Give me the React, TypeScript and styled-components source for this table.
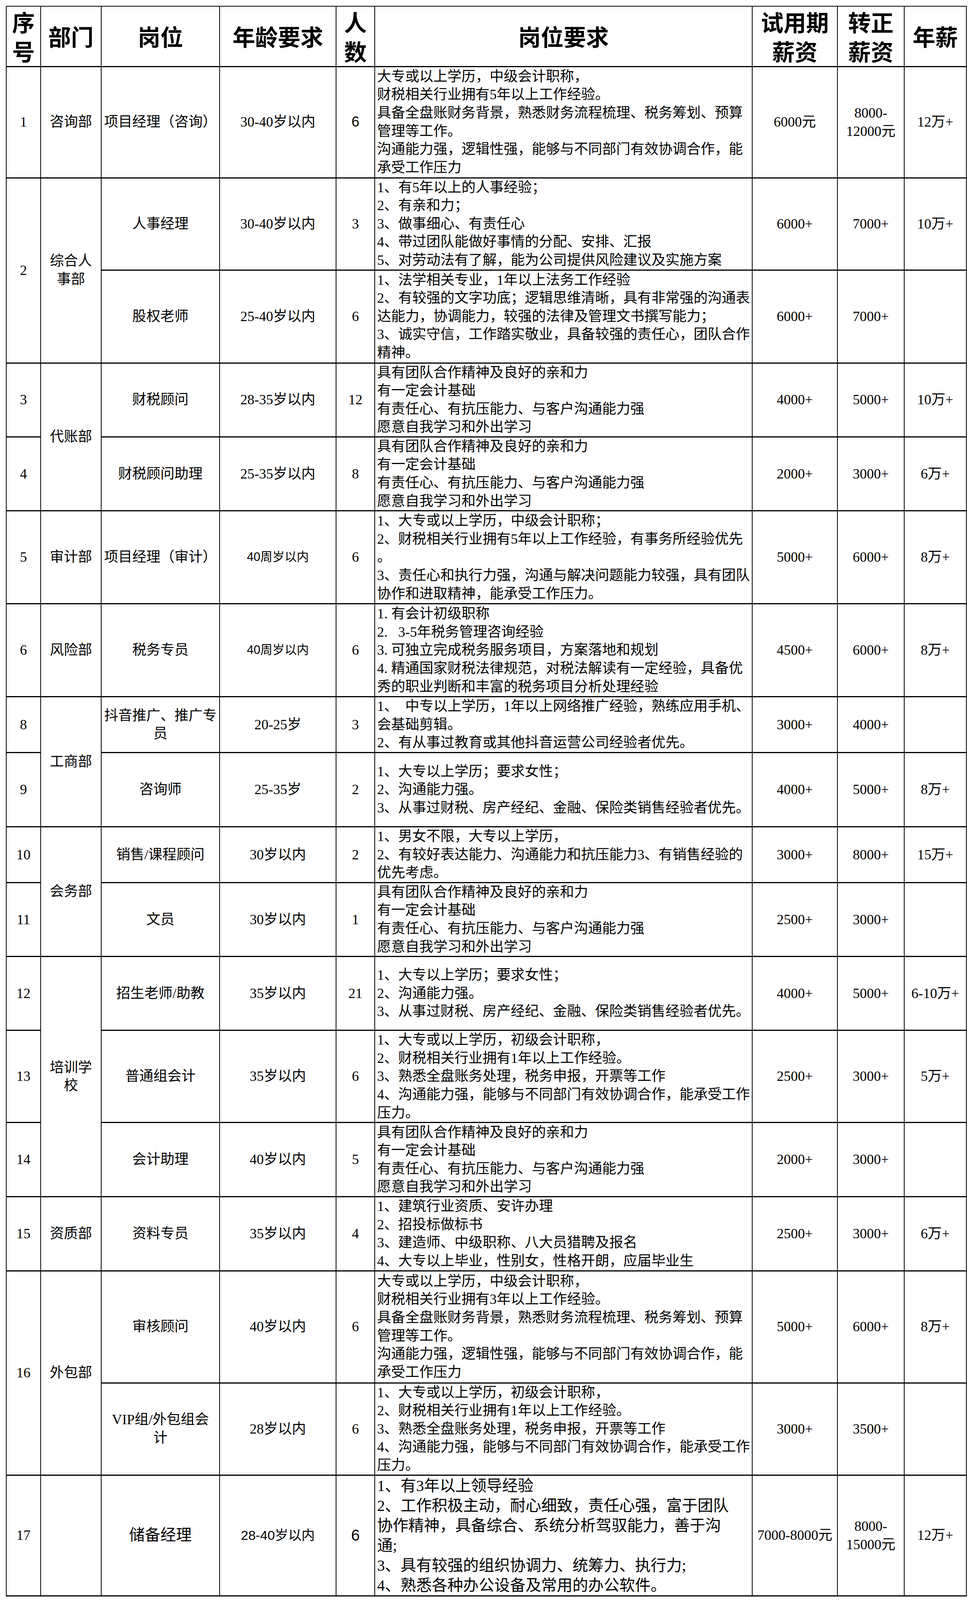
import React from "react";
import styled, { createGlobalStyle } from "styled-components";

const GlobalStyle = createGlobalStyle`
  html, body {
    margin: 0;
    padding: 0;
    background: #fff;
  }
  body {
    color: #000;
    font-family: "Liberation Serif", "Noto Sans CJK SC", serif;
  }
`;

const SERIF = `"Liberation Serif", "Noto Sans CJK SC", serif`;
const SANS = `"Liberation Sans", "Noto Sans CJK SC", sans-serif`;

// row borders are drawn outside the height given to a <tr>
const RULE = 3;

const Page = styled.div`
  padding: 15px 0 0 15px;
`;

const Sheet = styled.table`
  border-collapse: collapse;
  table-layout: fixed;
  width: 2457px;
`;

const Th = styled.th`
  border: 2px solid #000;
  padding: 0;
  font-family: "Noto Sans CJK SC", sans-serif;
  font-weight: 700;
  font-size: 58px;
  text-align: center;
  vertical-align: middle;
`;

const Td = styled.td<{ $size?: number; $left?: boolean; $sans?: boolean }>`
  border-left: 2px solid #000;
  border-right: 2px solid #000;
  border-top: ${RULE}px solid #000;
  border-bottom: ${RULE}px solid #000;
  padding: 0;
  font-family: ${(p) => (p.$sans ? SANS : SERIF)};
  font-size: ${(p) => p.$size ?? 36}px;
  text-align: ${(p) => (p.$left ? "left" : "center")};
  vertical-align: middle;
  overflow: visible;
`;

const Line = styled.div<{ $lh: number; $indent?: number }>`
  height: ${(p) => p.$lh}px;
  line-height: ${(p) => p.$lh}px;
  padding-left: ${(p) => p.$indent ?? 0}px;
  white-space: pre;
`;

type JobRow = {
  height: number;
  no: string | null;
  noSpan?: number;
  dept: string | null;
  deptSpan?: number;
  post: string;
  age: string;
  ageSans?: number;
  count: string;
  countSans?: number;
  lines: string[];
  trial: string;
  regular: string;
  annual: string;
  big?: boolean;
};

const TEAM = [
  "具有团队合作精神及良好的亲和力",
  "有一定会计基础",
  "有责任心、有抗压能力、与客户沟通能力强",
  "愿意自我学习和外出学习",
];

const SALES = [
  "1、大专以上学历；要求女性；",
  "2、沟通能力强。",
  "3、从事过财税、房产经纪、金融、保险类销售经验者优先。",
];

const ACCOUNTANT = [
  "1、大专或以上学历，初级会计职称，",
  "2、财税相关行业拥有1年以上工作经验。",
  "3、熟悉全盘账务处理，税务申报，开票等工作",
  "4、沟通能力强，能够与不同部门有效协调合作，能承受工作",
  "压力。",
];

const manager = (years: string) => [
  "大专或以上学历，中级会计职称，",
  `财税相关行业拥有${years}年以上工作经验。`,
  "具备全盘账财务背景，熟悉财务流程梳理、税务筹划、预算",
  "管理等工作。",
  "沟通能力强，逻辑性强，能够与不同部门有效协调合作，能",
  "承受工作压力",
];

const rows: JobRow[] = [
  {
    height: 288, no: "1", dept: "咨询部", post: "项目经理（咨询）", age: "30-40岁以内",
    count: "6", countSans: 36, lines: manager("5"), trial: "6000元", regular: "8000-\n12000元", annual: "12万+",
  },
  {
    height: 239, no: "2", noSpan: 2, dept: "综合人\n事部", deptSpan: 2, post: "人事经理", age: "30-40岁以内",
    count: "3",
    lines: [
      "1、有5年以上的人事经验；",
      "2、有亲和力；",
      "3、做事细心、有责任心",
      "4、带过团队能做好事情的分配、安排、汇报",
      "5、对劳动法有了解，能为公司提供风险建议及实施方案",
    ],
    trial: "6000+", regular: "7000+", annual: "10万+",
  },
  {
    height: 241, no: null, dept: null, post: "股权老师", age: "25-40岁以内", count: "6",
    lines: [
      "1、法学相关专业，1年以上法务工作经验",
      "2、有较强的文字功底；逻辑思维清晰，具有非常强的沟通表",
      "达能力，协调能力，较强的法律及管理文书撰写能力；",
      "3、诚实守信，工作踏实敬业，具备较强的责任心，团队合作",
      "精神。",
    ],
    trial: "6000+", regular: "7000+", annual: "",
  },
  {
    height: 192, no: "3", dept: "代账部", deptSpan: 2, post: "财税顾问", age: "28-35岁以内", count: "12",
    lines: TEAM, trial: "4000+", regular: "5000+", annual: "10万+",
  },
  {
    height: 190, no: "4", dept: null, post: "财税顾问助理", age: "25-35岁以内", count: "8",
    lines: TEAM, trial: "2000+", regular: "3000+", annual: "6万+",
  },
  {
    height: 241, no: "5", dept: "审计部", post: "项目经理（审计）", age: "40周岁以内", ageSans: 31, count: "6",
    lines: [
      "1、大专或以上学历，中级会计职称；",
      "2、财税相关行业拥有5年以上工作经验，有事务所经验优先",
      "。",
      "3、责任心和执行力强，沟通与解决问题能力较强，具有团队",
      "协作和进取精神，能承受工作压力。",
    ],
    trial: "5000+", regular: "6000+", annual: "8万+",
  },
  {
    height: 241, no: "6", dept: "风险部", post: "税务专员", age: "40周岁以内", ageSans: 31, count: "6",
    lines: [
      "1. 有会计初级职称",
      "2.   3-5年税务管理咨询经验",
      "3. 可独立完成税务服务项目，方案落地和规划",
      "4. 精通国家财税法律规范，对税法解读有一定经验，具备优",
      "秀的职业判断和丰富的税务项目分析处理经验",
    ],
    trial: "4500+", regular: "6000+", annual: "8万+",
  },
  {
    height: 143, no: "8", dept: "工商部", deptSpan: 2, post: "抖音推广、推广专\n员", age: "20-25岁", count: "3",
    lines: [
      "1、  中专以上学历，1年以上网络推广经验，熟练应用手机、",
      "会基础剪辑。",
      "2、有从事过教育或其他抖音运营公司经验者优先。",
    ],
    trial: "3000+", regular: "4000+", annual: "",
  },
  {
    height: 193, no: "9", dept: null, post: "咨询师", age: "25-35岁", count: "2",
    lines: SALES, trial: "4000+", regular: "5000+", annual: "8万+",
  },
  {
    height: 144, no: "10", dept: "会务部", deptSpan: 2, post: "销售/课程顾问", age: "30岁以内", count: "2",
    lines: [
      "1、男女不限，大专以上学历，",
      "2、有较好表达能力、沟通能力和抗压能力3、有销售经验的",
      "优先考虑。",
    ],
    trial: "3000+", regular: "8000+", annual: "15万+",
  },
  {
    height: 192, no: "11", dept: null, post: "文员", age: "30岁以内", count: "1",
    lines: TEAM, trial: "2500+", regular: "3000+", annual: "",
  },
  {
    height: 192, no: "12", dept: "培训学\n校", deptSpan: 3, post: "招生老师/助教", age: "35岁以内", count: "21",
    lines: SALES, trial: "4000+", regular: "5000+", annual: "6-10万+",
  },
  {
    height: 239, no: "13", dept: null, post: "普通组会计", age: "35岁以内", count: "6",
    lines: ACCOUNTANT, trial: "2500+", regular: "3000+", annual: "5万+",
  },
  {
    height: 193, no: "14", dept: null, post: "会计助理", age: "40岁以内", count: "5",
    lines: TEAM, trial: "2000+", regular: "3000+", annual: "",
  },
  {
    height: 191, no: "15", dept: "资质部", post: "资料专员", age: "35岁以内", count: "4",
    lines: [
      "1、建筑行业资质、安许办理",
      "2、招投标做标书",
      "3、建造师、中级职称、八大员猎聘及报名",
      "4、大专以上毕业，性别女，性格开朗，应届毕业生",
    ],
    trial: "2500+", regular: "3000+", annual: "6万+",
  },
  {
    height: 290, no: "16", noSpan: 2, dept: "外包部", deptSpan: 2, post: "审核顾问", age: "40岁以内", count: "6",
    lines: manager("3"), trial: "5000+", regular: "6000+", annual: "8万+",
  },
  {
    height: 239, no: null, dept: null, post: "VIP组/外包组会\n计", age: "28岁以内", count: "6",
    lines: ACCOUNTANT, trial: "3000+", regular: "3500+", annual: "",
  },
  {
    height: 312, no: "17", dept: "", post: "储备经理", age: "28-40岁以内", ageSans: 34, count: "6", countSans: 40,
    lines: [
      "1、有3年以上领导经验",
      "2、工作积极主动，耐心细致，责任心强，富于团队",
      "协作精神，具备综合、系统分析驾驭能力，善于沟",
      "通;",
      "3、具有较强的组织协调力、统筹力、执行力;",
      "4、熟悉各种办公设备及常用的办公软件。",
    ],
    trial: "7000-8000元", regular: "8000-\n15000元", annual: "12万+", big: true,
  },
];

const widths = [88, 155, 303, 298, 99, 966, 218, 171, 159];

const headers = ["序\n号", "部门", "岗位", "年龄要求", "人\n数", "岗位要求", "试用期\n薪资", "转正\n薪资", "年薪"];

function Lines({ text, lh = 46.6, indent }: { text: string | string[]; lh?: number; indent?: number }) {
  const list = Array.isArray(text) ? text : text.split("\n");
  return (
    <>
      {list.map((t, i) => (
        <Line key={i} $lh={lh} $indent={indent}>
          {t}
        </Line>
      ))}
    </>
  );
}

export default function App() {
  return (
    <Page>
      <GlobalStyle />
      <Sheet>
        <colgroup>
          {widths.map((w, i) => (
            <col key={i} style={{ width: w }} />
          ))}
        </colgroup>
        <thead>
          <tr style={{ height: 154 }}>
            {headers.map((h) => (
              <Th key={h}>
                <Lines text={h} lh={75} />
              </Th>
            ))}
          </tr>
        </thead>
        <tbody>
          {rows.map((r, i) => (
            <tr key={i} style={{ height: r.height - RULE }}>
              {r.no !== null && (
                <Td rowSpan={r.noSpan}>
                  <Lines text={r.no} />
                </Td>
              )}
              {r.dept !== null && (
                <Td rowSpan={r.deptSpan}>
                  <Lines text={r.dept} />
                </Td>
              )}
              <Td $size={r.big ? 40 : 36}>
                <Lines text={r.post} />
              </Td>
              <Td $sans={!!r.ageSans} $size={r.ageSans ?? 36}>
                <Lines text={r.age} />
              </Td>
              <Td $sans={!!r.countSans} $size={r.countSans ?? 36}>
                <Lines text={r.count} />
              </Td>
              <Td $left $size={r.big ? 40 : 36}>
                <Lines text={r.lines} lh={r.big ? 51 : 46.6} indent={5} />
              </Td>
              <Td>
                <Lines text={r.trial} />
              </Td>
              <Td>
                <Lines text={r.regular} />
              </Td>
              <Td>
                <Lines text={r.annual} />
              </Td>
            </tr>
          ))}
        </tbody>
      </Sheet>
    </Page>
  );
}
